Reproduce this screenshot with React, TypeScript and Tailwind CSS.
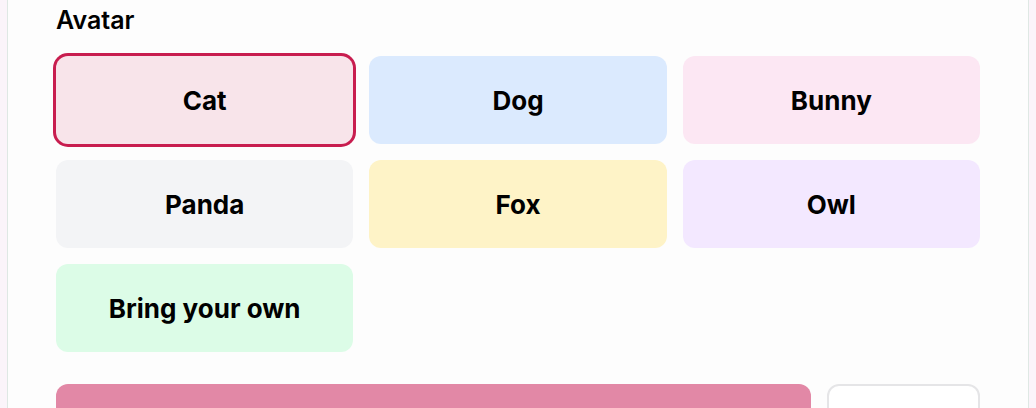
import { useState } from "react"

const AVATARS = [
  { name: "Cat", bg: "bg-[#f8e4ea]" },
  { name: "Dog", bg: "bg-[#dbeafe]" },
  { name: "Bunny", bg: "bg-[#fce7f3]" },
  { name: "Panda", bg: "bg-[#f3f4f6]" },
  { name: "Fox", bg: "bg-[#fef3c7]" },
  { name: "Owl", bg: "bg-[#f3e8ff]" },
  { name: "Bring your own", bg: "bg-[#dcfce7]" },
]

export default function App() {
  const [selected, setSelected] = useState("Cat")

  return (
    <div className="min-h-screen bg-[#fbf4fa] px-[7px] font-['Inter','Noto_Sans',sans-serif] text-black">
      <div className="min-h-screen border-x border-[#dfe8e4] bg-[#fdfdfd] px-12 pt-[5px]">
        {/* label */}
        <div className="text-[25px] font-semibold leading-[30px]">Avatar</div>

        {/* avatar choices */}
        <div className="mt-[21px] grid grid-cols-3 gap-4">
          {AVATARS.map((a) => (
            <button
              key={a.name}
              type="button"
              onClick={() => setSelected(a.name)}
              className={`flex h-[88px] items-center justify-center rounded-xl pt-px text-[26px] font-bold ${a.bg} ${
                selected === a.name ? "ring-[3px] ring-[#c81d4f]" : ""
              }`}
            >
              {a.name}
            </button>
          ))}
        </div>

        {/* actions */}
        <div className="mt-8 flex gap-4">
          <button type="button" className="h-12 flex-1 rounded-xl bg-[#e288a6]" />
          <button type="button" className="h-12 w-[153px] rounded-xl border-2 border-[#e5e5e7] bg-white" />
        </div>
      </div>
    </div>
  )
}
